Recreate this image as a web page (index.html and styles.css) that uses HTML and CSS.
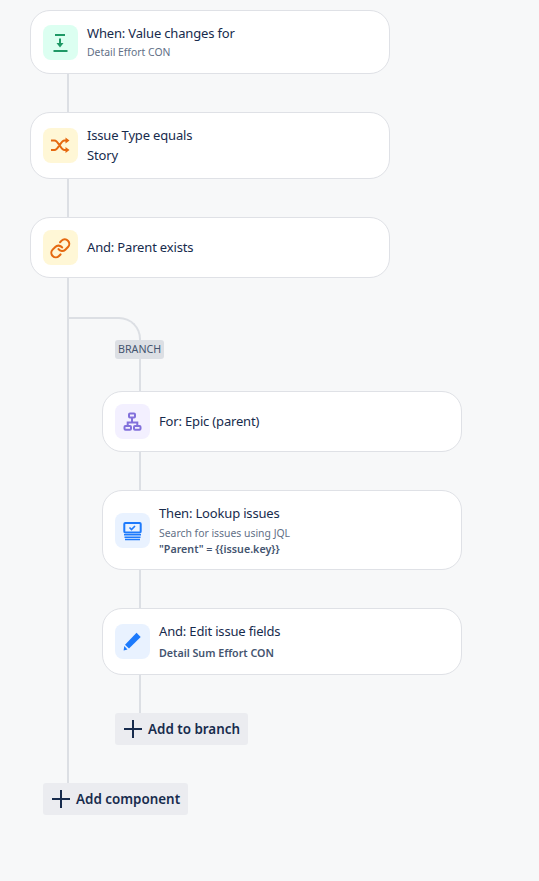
FILE: index.html
```html
<!DOCTYPE html>
<html lang="en">
<head>
<meta charset="utf-8">
<title>Automation rule</title>
<link rel="stylesheet" href="styles.css">
</head>
<body>
<main class="flow">
  <article class="card">
    <span class="tile tile-green">
      <svg viewBox="0 0 35 35" class="glyph"><path d="M12 10h10M10.500 26h14M17 13.500v7" fill="none" stroke="#1f9966" stroke-width="2"/><path d="M13.500 18h7l-3.500 4.500z" fill="#1f9966"/></svg>
    </span>
    <div class="copy">
      <div class="title">When: Value changes for</div>
      <div class="sub">Detail Effort CON</div>
    </div>
  </article>
  <div class="stem"></div>
  <article class="card">
    <span class="tile tile-yellow">
      <svg viewBox="0 0 35 35" class="glyph"><path d="M8 12.500h3.500c4 0 6 9.500 10 9.500h3M8 22h3.500c4 0 6-9.500 10-9.500h3" fill="none" stroke="#e56910" stroke-width="2"/><path d="M22.500 9.500l4 3-4 3zM22.500 19l4 3-4 3z" fill="#e56910"/></svg>
    </span>
    <div class="copy">
      <div class="title">Issue Type equals</div>
      <div class="value">Story</div>
    </div>
  </article>
  <div class="stem"></div>
  <article class="card">
    <span class="tile tile-yellow">
      <svg viewBox="0 0 35 35" class="glyph"><g transform="translate(6.500 7.500) scale(0.9)" fill="none" stroke="#e56910" stroke-width="2.300" stroke-linecap="round" stroke-linejoin="round"><path d="M10 13a5 5 0 0 0 7.540.540l3-3a5 5 0 0 0-7.070-7.070l-1.720 1.710"/><path d="M14 11a5 5 0 0 0-7.540-.540l-3 3a5 5 0 0 0 7.070 7.070l1.710-1.710"/></g></svg>
    </span>
    <div class="copy">
      <div class="title title-solo">And: Parent exists</div>
    </div>
  </article>

  <section class="rail">
    <div class="elbow"></div>
    <span class="tag">BRANCH</span>
    <div class="branch">
      <div class="stem stem-tag"></div>
      <article class="card">
        <span class="tile tile-purple">
          <svg viewBox="0 0 35 35" class="glyph"><g fill="none" stroke="#8270db" stroke-width="2"><rect x="14" y="9.500" width="6" height="4" rx="1"/><rect x="9.500" y="22" width="6.500" height="3.800" rx="1"/><rect x="19" y="22" width="6.500" height="3.800" rx="1"/><path d="M17 13.500v5M12.700 22v-3.500h9.600V22"/></g></svg>
        </span>
        <div class="copy">
          <div class="title title-solo">For: Epic (parent)</div>
        </div>
      </article>
      <div class="stem"></div>
      <article class="card">
        <span class="tile tile-blue">
          <svg viewBox="0 0 35 35" class="glyph"><g fill="none" stroke="#1d7afc"><rect x="9.300" y="10" width="16.400" height="9.500" rx="1" stroke-width="2"/><path d="M14.500 14.500l2 2 3.500-3.500" stroke-width="1.600"/><path d="M9 21.800h17M9.500 24.200h16M10 26.600h15" stroke-width="1.500"/></g></svg>
        </span>
        <div class="copy">
          <div class="title">Then: Lookup issues</div>
          <div class="sub sub-tight sub-first">Search for issues using JQL</div>
          <div class="sub sub-tight sub-bold">"Parent" = {{issue.key}}</div>
        </div>
      </article>
      <div class="stem"></div>
      <article class="card">
        <span class="tile tile-blue">
          <svg viewBox="0 0 35 35" class="glyph"><path d="M21.500 8.700l4.200 4.300-11.700 11.500-4-3.800z" fill="#1d7afc"/><path d="M9.300 22l3.200 3.400-3.900 1z" fill="#1d7afc"/></svg>
        </span>
        <div class="copy">
          <div class="title">And: Edit issue fields</div>
          <div class="sub sub-field sub-bold">Detail Sum Effort CON</div>
        </div>
      </article>
      <div class="stem"></div>
      <button class="add" type="button">
        <svg viewBox="0 0 18 18" class="plus"><path d="M0 9h18M9 0v18" fill="none" stroke="#172b4d" stroke-width="2"/></svg>
        Add to branch
      </button>
    </div>
  </section>
  <button class="add" type="button">
    <svg viewBox="0 0 18 18" class="plus"><path d="M0 9h18M9 0v18" fill="none" stroke="#172b4d" stroke-width="2"/></svg>
    Add component
  </button>
</main>
</body>
</html>
```

FILE: styles.css
```css
* { box-sizing: border-box; }

html, body {
  margin: 0;
  min-height: 881px;
  background: #f7f8f9;
}

body {
  font-family: "Noto Sans", "Open Sans", sans-serif;
  color: #172b4d;
  overflow: hidden;
}

.flow {
  padding: 10px 0 0 30px;
  width: 470px;
}

.card {
  display: flex;
  align-items: center;
  gap: 9px;
  width: 360px;
  padding: 12px;
  background: #fff;
  border: 1px solid #dfe1e6;
  border-radius: 20px;
}

.tile {
  flex: none;
  width: 35px;
  height: 35px;
  border-radius: 8px;
}

.tile-green { background: #dcfff1; }
.tile-yellow { background: #fff7d6; }
.tile-purple { background: #f3f0ff; }
.tile-blue { background: #e9f2ff; }

.glyph {
  display: block;
  width: 35px;
  height: 35px;
}

.title {
  font-size: 13px;
  letter-spacing: -0.170px;
  line-height: 20px;
}

.title-solo {
  margin-top: -2px;
}

.value {
  font-size: 13px;
  letter-spacing: -0.130px;
  line-height: 21px;
}

.sub {
  font-size: 10.400px;
  line-height: 17px;
  padding-top: 1px;
  color: #626f86;
}

.sub-tight {
  line-height: 16px;
  padding-top: 0;
}

.sub-first {
  padding-top: 2px;
}

.sub-field {
  line-height: 21px;
  padding-top: 2px;
  height: 21px;
}

.sub-bold {
  font-size: 10.700px;
  font-weight: 600;
  color: #44546f;
}

.stem {
  width: 2px;
  height: 38px;
  margin-left: 37px;
  background: #dcdfe4;
}

.rail {
  display: flex;
  flex-direction: column;
  margin-left: 37px;
  border-left: 2px solid #dcdfe4;
  padding-top: 39px;
  height: 505px;
}

.elbow {
  width: 72px;
  height: 23px;
  border-top: 2px solid #dcdfe4;
  border-right: 2px solid #dcdfe4;
  border-top-right-radius: 22px;
}

.tag {
  align-self: flex-start;
  margin-left: 46px;
  padding: 0 3px;
  font-size: 10.700px;
  line-height: 19px;
  color: #44546f;
  background: #dcdfe4;
  border-radius: 3px;
}

.branch {
  display: flex;
  flex-direction: column;
  align-items: flex-start;
  margin-left: 33px;
}

.stem-tag { height: 32px; }

.add {
  display: inline-flex;
  align-items: center;
  gap: 6px;
  height: 32px;
  margin-left: 13px;
  padding: 0 8px 0 9px;
  border: 0;
  border-radius: 3px;
  background: #ebecf0;
  color: #172b4d;
  font: 600 13.400px/20px "Noto Sans", "Open Sans", sans-serif;
}

.plus {
  width: 18px;
  height: 18px;
}
```
